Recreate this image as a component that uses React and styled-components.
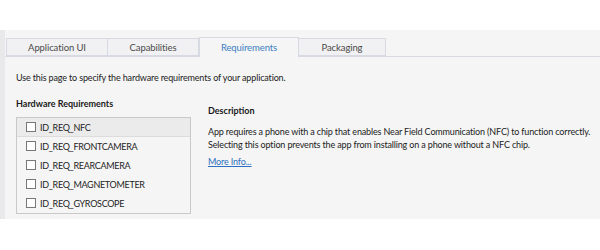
import React from 'react';
import styled, {createGlobalStyle} from 'styled-components';

const GlobalStyle = createGlobalStyle`
  body {
    margin: 0;
    background: #ffffff;
    font-family: Lato, "Noto Sans", sans-serif;
  }
`

const Page = styled.div`
  width: 600px;
  height: 250px;
  padding-top: 30px;
  box-sizing: border-box;
`

const Panel = styled.div`
  height: 189px;
  background: #f5f5f5;
  border-left: 5px solid #e9e9eb;
  box-sizing: border-box;
`

const TabStrip = styled.div`
  display: flex;
  align-items: flex-end;
  height: 27px;
  padding-left: 1px;
  border-bottom: 1px solid #d7dae2;
  box-sizing: border-box;
`

const Tab = styled.div`
  width: ${p => p.w}px;
  height: ${p => (p.active ? 20 : 18)}px;
  margin-bottom: ${p => (p.active ? -1 : 0)}px;
  box-sizing: border-box;
  border: 1px solid #d7dae2;
  border-bottom: ${p => (p.active ? 'none' : '1px solid #d7dae2')};
  border-left-width: ${p => (p.first || p.active ? 1 : 0)}px;
  background: ${p => (p.active ? '#f5f5f5' : '#f1f1f3')};
  color: ${p => (p.active ? '#3c7fc2' : '#4a4a4a')};
  font-size: 9.5px;
  letter-spacing: -0.1px;
  display: flex;
  align-items: center;
  justify-content: center;
  padding-bottom: ${p => (p.active ? 1 : 0)}px;
`

const Content = styled.div`
  padding: 15px 0 0 11px;
  font-size: 9px;
  letter-spacing: -0.15px;
  color: #222;
`

const Intro = styled.div`
  line-height: 12px;
`

const Columns = styled.div`
  display: grid;
  grid-template-columns: 175px 1fr;
  column-gap: 17px;
  margin-top: 14px;
`

const Heading = styled.div`
  font-weight: bold;
  line-height: 12px;
  color: #1a1a1a;
  letter-spacing: 0;
`

const ListBox = styled.div`
  margin-top: 7px;
  border: 1px solid #c9c9c9;
  background: #f5f5f5;
`

const Row = styled.div`
  height: 19px;
  display: flex;
  align-items: center;
  padding-left: 9px;
  gap: 4px;
  box-sizing: border-box;
  background: ${p => (p.selected ? '#ebebeb' : 'transparent')};
  border-bottom: 1px solid ${p => (p.selected ? '#dcdcdc' : 'transparent')};
`

const Check = styled.span`
  width: 8px;
  height: 8px;
  border: 1px solid #777;
  background: #fff;
  flex: none;
`

const Label = styled.span`
  font-size: 9px;
  letter-spacing: -0.3px;
  color: #1e1e1e;
`

const Description = styled.div`
  padding-top: 7px;
`

const Para = styled.p`
  margin: 8px 0 0;
  line-height: 13px;
  color: #222;
  white-space: nowrap;
`

const MoreInfo = styled.a`
  display: inline-block;
  margin-top: 5px;
  color: #2d6fc0;
  text-decoration: underline;
  line-height: 12px;
`

const tabs = [
    {name: 'Application UI', w: 102},
    {name: 'Capabilities', w: 91},
    {name: 'Requirements', w: 100, active: true},
    {name: 'Packaging', w: 87},
]

const items = ['ID_REQ_NFC', 'ID_REQ_FRONTCAMERA', 'ID_REQ_REARCAMERA', 'ID_REQ_MAGNETOMETER', 'ID_REQ_GYROSCOPE']

const App = () => {
    return (
        <Page>
            <GlobalStyle/>
            <Panel>
                <TabStrip>
                    {tabs.map((t, i) => (
                        <Tab key={t.name} w={t.w} active={t.active} first={i === 0}>{t.name}</Tab>
                    ))}
                </TabStrip>
                <Content>
                    <Intro>Use this page to specify the hardware requirements of your application.</Intro>
                    <Columns>
                        <div>
                            <Heading>Hardware Requirements</Heading>
                            <ListBox>
                                {items.map((item, i) => (
                                    <Row key={item} selected={i === 0}>
                                        <Check/>
                                        <Label>{item}</Label>
                                    </Row>
                                ))}
                            </ListBox>
                        </div>
                        <Description>
                            <Heading>Description</Heading>
                            <Para>
                                App requires a phone with a chip that enables Near Field Communication (NFC) to function correctly.
                                <br/>
                                Selecting this option prevents the app from installing on a phone without a NFC chip.
                            </Para>
                            <MoreInfo href="#">More Info...</MoreInfo>
                        </Description>
                    </Columns>
                </Content>
            </Panel>
        </Page>
    );
}

export default App;
